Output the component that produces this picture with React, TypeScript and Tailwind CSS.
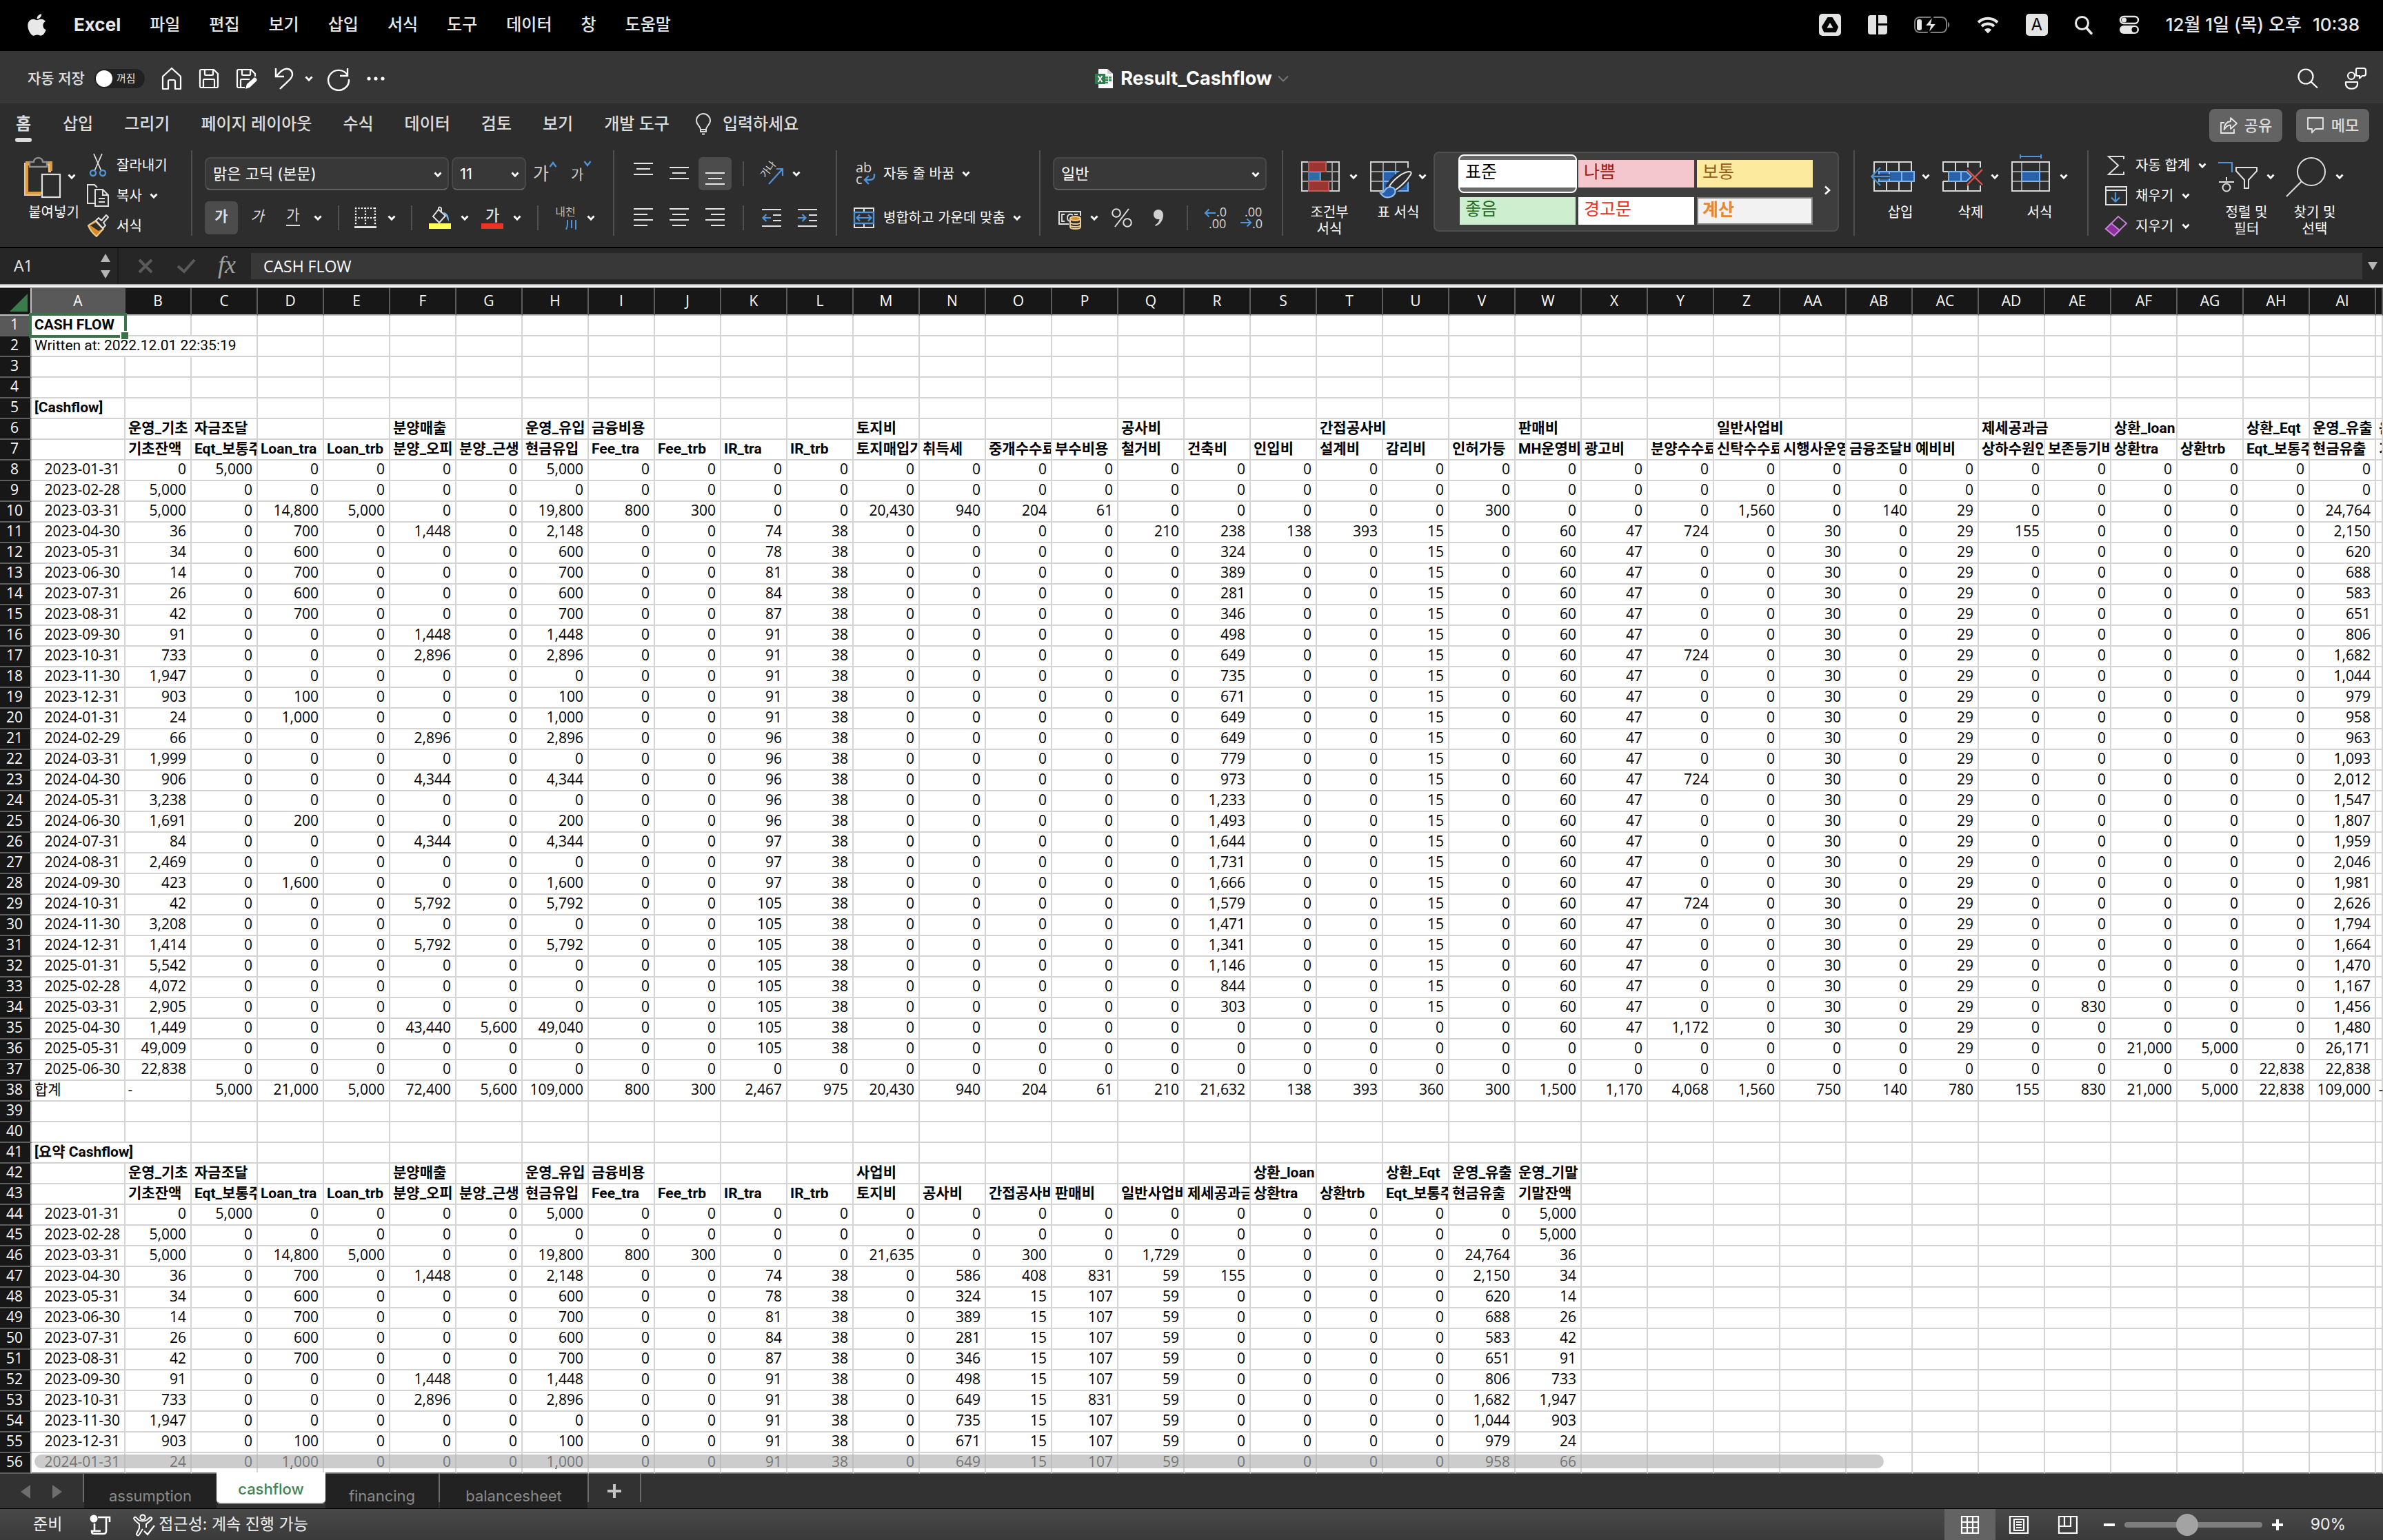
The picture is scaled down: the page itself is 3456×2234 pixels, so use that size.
import React from "react";
import { FaApple } from "react-icons/fa";

const UI = "font-['Inter','Noto_Sans_CJK_KR',sans-serif]";

/* ---------- sheet data ---------- */

function letter(i: number): string {
  return i < 26 ? String.fromCharCode(65 + i) : "A" + String.fromCharCode(65 + i - 26);
}
const COLS = Array.from({ length: 36 }, (_, i) => letter(i));

const fmt = (n: number) => n.toLocaleString("en-US");

const MONTHS = Array.from({ length: 30 }, (_, i) => {
  const d = new Date(Date.UTC(2023, i + 1, 0));
  return d.toISOString().slice(0, 10);
});

type Series = number[];
const N = 30;
const at = (values: Record<number, number>): Series =>
  Array.from({ length: N }, (_, i) => values[i + 8] ?? 0);
const span = (from: number, to: number, v: number): Series =>
  Array.from({ length: N }, (_, i) => (i + 8 >= from && i + 8 <= to ? v : 0));
const from = (row: number, list: number[]): Series =>
  Array.from({ length: N }, (_, i) => list[i + 8 - row] ?? 0);

const OUTFLOW = [
  0, 0, 24764, 2150, 620, 688, 583, 651, 806, 1682, 1044, 979, 958, 963, 1093, 2012, 1547, 1807,
  1959, 2046, 1981, 2626, 1794, 1664, 1470, 1167, 1456, 1480, 26171, 22838,
];
const BUILD = [
  238, 324, 389, 281, 346, 498, 649, 735, 671, 649, 649, 779, 973, 1233, 1493, 1644, 1731, 1666,
  1579, 1471, 1341, 1146, 844, 303,
];

const DATA: Record<string, Series> = {
  B: from(8, [
    0, 5000, 5000, 36, 34, 14, 26, 42, 91, 733, 1947, 903, 24, 66, 1999, 906, 3238, 1691, 84, 2469,
    423, 42, 3208, 1414, 5542, 4072, 2905, 1449, 49009, 22838,
  ]),
  C: at({ 8: 5000 }),
  D: at({ 10: 14800, 11: 700, 12: 600, 13: 700, 14: 600, 15: 700, 19: 100, 20: 1000, 25: 200, 28: 1600 }),
  E: at({ 10: 5000 }),
  F: at({ 11: 1448, 16: 1448, 17: 2896, 21: 2896, 23: 4344, 26: 4344, 29: 5792, 31: 5792, 35: 43440 }),
  G: at({ 35: 5600 }),
  I: at({ 10: 800 }),
  J: at({ 10: 300 }),
  K: from(11, [
    74, 78, 81, 84, 87, 91, 91, 91, 91, 91, 96, 96, 96, 96, 96, 97, 97, 97, 105, 105, 105, 105, 105,
    105, 105, 105,
  ]),
  L: span(11, 36, 38),
  M: at({ 10: 20430 }),
  N: at({ 10: 940 }),
  O: at({ 10: 204 }),
  P: at({ 10: 61 }),
  Q: at({ 11: 210 }),
  R: from(11, BUILD),
  S: at({ 11: 138 }),
  T: at({ 11: 393 }),
  U: span(11, 34, 15),
  V: at({ 10: 300 }),
  W: span(11, 35, 60),
  X: span(11, 35, 47),
  Y: at({ 11: 724, 17: 724, 23: 724, 29: 724, 35: 1172 }),
  Z: at({ 10: 1560 }),
  AA: span(11, 35, 30),
  AB: at({ 10: 140 }),
  AC: span(10, 36, 29),
  AD: at({ 11: 155 }),
  AE: at({ 34: 830 }),
  AF: at({ 36: 21000 }),
  AG: at({ 36: 5000 }),
  AH: at({ 37: 22838 }),
  AI: OUTFLOW,
};
DATA.H = DATA.C.map((c, i) => c + DATA.D[i] + DATA.E[i] + DATA.F[i] + DATA.G[i]);

const SUMMARY: Record<string, Series> = {
  M: from(10, [21635]),
  N: from(11, [586, ...BUILD.slice(1)]),
  O: from(10, [300, 408, 15, 15, 15, 15, 15, 15, 15, 15, 15]),
  P: from(11, [831, 107, 107, 107, 107, 107, 831, 107, 107, 107]),
  Q: from(10, [1729, 59, 59, 59, 59, 59, 59, 59, 59, 59, 59]),
  R: at({ 11: 155 }),
  S: at({}),
  T: at({}),
  U: at({}),
  V: OUTFLOW,
  W: from(8, [5000, 5000, 36, 34, 14, 26, 42, 91, 733, 1947, 903, 24, 66]),
};
for (const c of ["B", "C", "D", "E", "F", "G", "H", "I", "J", "K", "L"]) SUMMARY[c] = DATA[c];

const TOTALS = [
  5000, 21000, 5000, 72400, 5600, 109000, 800, 300, 2467, 975, 20430, 940, 204, 61, 210, 21632, 138,
  393, 360, 300, 1500, 1170, 4068, 1560, 750, 140, 780, 155, 830, 21000, 5000, 22838, 109000,
];

type Cell = { text: string; bold?: boolean; right?: boolean; cover?: number };
const bold = (text: string, cover = 1): Cell => ({ text, bold: true, cover });

function buildSheet(): Record<string, Cell>[] {
  const sheet: Record<string, Cell>[] = Array.from({ length: 57 }, () => ({}));
  sheet[1].A = bold("CASH FLOW");
  sheet[2].A = { text: "Written at: 2022.12.01 22:35:19", cover: 3 };
  sheet[5].A = bold("[Cashflow]");
  sheet[41].A = bold("[요약 Cashflow]", 2);

  const shared: [Record<string, string>, Record<string, string>] = [
    { B: "운영_기초", C: "자금조달", F: "분양매출", H: "운영_유입", I: "금융비용" },
    {
      B: "기초잔액", C: "Eqt_보통주", D: "Loan_tra", E: "Loan_trb", F: "분양_오피", G: "분양_근생",
      H: "현금유입", I: "Fee_tra", J: "Fee_trb", K: "IR_tra", L: "IR_trb",
    },
  ];
  const heads: Record<number, Record<string, string>> = {
    6: {
      ...shared[0], M: "토지비", Q: "공사비", T: "간접공사비", W: "판매비", Z: "일반사업비",
      AD: "제세공과금", AF: "상환_loan", AH: "상환_Eqt", AI: "운영_유출", AJ: "운영_기말",
    },
    7: {
      ...shared[1], M: "토지매입가", N: "취득세", O: "중개수수료", P: "부수비용", Q: "철거비",
      R: "건축비", S: "인입비", T: "설계비", U: "감리비", V: "인허가등", W: "MH운영비", X: "광고비",
      Y: "분양수수료", Z: "신탁수수료", AA: "시행사운영비", AB: "금융조달비", AC: "예비비",
      AD: "상하수원인", AE: "보존등기비", AF: "상환tra", AG: "상환trb", AH: "Eqt_보통주",
      AI: "현금유출", AJ: "기말잔액",
    },
    42: {
      ...shared[0], M: "사업비", S: "상환_loan", U: "상환_Eqt", V: "운영_유출", W: "운영_기말",
    },
    43: {
      ...shared[1], M: "토지비", N: "공사비", O: "간접공사비", P: "판매비", Q: "일반사업비",
      R: "제세공과금", S: "상환tra", T: "상환trb", U: "Eqt_보통주", V: "현금유출", W: "기말잔액",
    },
  };
  for (const [row, cells] of Object.entries(heads)) {
    for (const [col, text] of Object.entries(cells)) {
      const wide = row === "6" && ["T", "Z", "AD"].includes(col);
      sheet[Number(row)][col] = bold(text, wide ? 2 : 1);
    }
  }
  for (let i = 0; i < N; i++) {
    sheet[8 + i].A = { text: MONTHS[i], right: true };
    for (const c of Object.keys(DATA)) sheet[8 + i][c] = { text: fmt(DATA[c][i]), right: true };
  }
  sheet[38].A = { text: "합계" };
  sheet[38].B = { text: "-" };
  sheet[38].AJ = { text: "-" };
  TOTALS.forEach((v, i) => (sheet[38][COLS[i + 2]] = { text: fmt(v), right: true }));
  for (let i = 0; i < 13; i++) {
    sheet[44 + i].A = { text: MONTHS[i], right: true };
    for (const c of Object.keys(SUMMARY)) sheet[44 + i][c] = { text: fmt(SUMMARY[c][i]), right: true };
  }
  return sheet;
}
const SHEET = buildSheet();

/* ---------- small pieces ---------- */

function Svg({ w, h, children, className = "" }: { w: number; h: number; children: React.ReactNode; className?: string }) {
  return (
    <svg width={w} height={h} viewBox={`0 0 ${w} ${h}`} fill="none" aria-hidden="true" className={`shrink-0 overflow-visible ${className}`}>
      {children}
    </svg>
  );
}

function Chevron({ className = "" }: { className?: string }) {
  return (
    <Svg w={12} h={10} className={className}>
      <path d="M1.500 2.500 6 7.200 10.500 2.500" stroke="#fff" strokeWidth="2.800" />
    </Svg>
  );
}

const Divider = () => <div className="h-[124px] w-0.5 shrink-0 bg-[#4f4f4f]" />;
const Tick = ({ className = "" }: { className?: string }) => (
  <div className={`h-9 w-0.5 shrink-0 bg-[#4f4f4f] ${className}`} />
);

function Lines({ rows, top }: { rows: [number, number][]; top: number }) {
  return (
    <Svg w={28} h={40}>
      {rows.map(([x, w], i) => (
        <rect key={i} x={x} y={top + i * 8} width={w} height="2" fill="#e6e6e6" />
      ))}
    </Svg>
  );
}

/* ---------- menu bar ---------- */

const MENUS = ["파일", "편집", "보기", "삽입", "서식", "도구", "데이터", "창", "도움말"];

function MenuBar() {
  return (
    <header className="flex h-[74px] items-center justify-between bg-black pr-[34px] pb-0.5 pl-10 text-[24px] leading-8 font-medium text-[#e8e8e8]">
      <nav className="flex items-center gap-[42px]">
        <button aria-label="Apple" className="-mr-0.5">
          <FaApple className="h-9 w-[27px]" />
        </button>
        <button className="text-[26px] font-bold">Excel</button>
        {MENUS.map((m) => (
          <button key={m}>{m}</button>
        ))}
      </nav>
      <div className="flex items-center gap-[39px]">
        <Svg w={32} h={32}>
          <rect width="32" height="32" rx="5" fill="#e3e5e4" />
          <path d="M13 6h6l8 13-3 7H8l-3-7z" fill="#000" stroke="#000" strokeWidth="2" strokeLinejoin="round" />
          <path d="m16 13 4.500 7.500h-9z" fill="#e3e5e4" />
        </Svg>
        <Svg w={28} h={28}>
          <path d="M4 0h8v28H4a4 4 0 0 1-4-4V4a4 4 0 0 1 4-4zM15 0h9a4 4 0 0 1 4 4v8H15zM15 15h13v9a4 4 0 0 1-4 4h-9z" fill="#e3e3e3" />
        </Svg>
        <Svg w={52} h={28}>
          <rect x="1" y="3" width="46" height="22" rx="7" stroke="#7d7d7d" strokeWidth="2" />
          <path d="M49 10c3 1 3 7 0 8z" fill="#7d7d7d" />
          <rect x="4" y="6" width="7" height="16" rx="3" fill="#e8e8e8" />
          <path d="M28 0 15 16h8l-3 12 13-16h-8z" fill="#e8e8e8" stroke="#000" strokeWidth="2" />
        </Svg>
        <Svg w={32} h={26}>
          <path d="M2 9.500a20 20 0 0 1 28 0M7 15a13 13 0 0 1 18 0" stroke="#e8e8e8" strokeWidth="4" />
          <path d="M16 25.500 10.800 20a7.500 7.500 0 0 1 10.400 0z" fill="#e8e8e8" />
        </Svg>
        <div className="grid size-8 place-items-center rounded-[5px] bg-[#e3e5e4] text-[24px] font-normal text-black">A</div>
        <Svg w={26} h={28}>
          <circle cx="10.500" cy="11.500" r="9" stroke="#e8e8e8" strokeWidth="3" />
          <path d="m17 18.500 7 8" stroke="#e8e8e8" strokeWidth="3.500" strokeLinecap="round" />
        </Svg>
        <Svg w={28} h={28}>
          <rect x="1" y="2" width="26" height="10" rx="5" stroke="#e8e8e8" strokeWidth="2.400" />
          <circle cx="6.500" cy="7" r="3.600" fill="#e8e8e8" />
          <rect y="15" width="28" height="12" rx="6" fill="#e8e8e8" />
          <circle cx="21.500" cy="21" r="4" fill="#000" />
        </Svg>
        <time className="flex gap-4 text-[26px] whitespace-nowrap">
          <span>12월 1일 (목) 오후</span>
          <span>10:38</span>
        </time>
      </div>
    </header>
  );
}

/* ---------- title bar ---------- */

function TitleBar() {
  return (
    <div className="grid h-[76px] grid-cols-[1fr_auto_1fr] items-center bg-[#363636] px-6 pt-1 text-white">
      <div className="flex items-center pl-4">
        <label htmlFor="autosave" className="text-[21px] leading-7 font-medium text-[#e0e0e0]">자동 저장</label>
        <button id="autosave" role="switch" aria-checked="false" className="ml-3.5 flex h-7 w-[73px] items-center rounded-full bg-[#212121] pl-0.5 text-[15px] text-[#e0e0e0]">
          <span className="mr-1.5 size-6 rounded-full bg-white" />
          꺼짐
        </button>
        <button aria-label="홈" className="ml-6">
          <Svg w={30} h={34}>
            <path d="M2 14 15 2l13 12v18h-8V21a2 2 0 0 0-2-2h-6a2 2 0 0 0-2 2v11H2z" stroke="#fff" strokeWidth="2.200" strokeLinejoin="round" />
          </Svg>
        </button>
        <button aria-label="저장" className="ml-6">
          <Svg w={30} h={30}>
            <path d="M4 2h18l6 6v18a2 2 0 0 1-2 2H4a2 2 0 0 1-2-2V4a2 2 0 0 1 2-2z" stroke="#fff" strokeWidth="2.200" />
            <path d="M9 2v7a1 1 0 0 0 1 1h10a1 1 0 0 0 1-1V2M7 28V17a1 1 0 0 1 1-1h14a1 1 0 0 1 1 1v11" stroke="#fff" strokeWidth="2.200" />
          </Svg>
        </button>
        <button aria-label="다른 이름으로 저장" className="ml-6">
          <Svg w={32} h={32}>
            <path d="M13 29H4a2 2 0 0 1-2-2V5a2 2 0 0 1 2-2h18l6 6v4" stroke="#fff" strokeWidth="2.200" />
            <path d="M9 3v7a1 1 0 0 0 1 1h10a1 1 0 0 0 1-1V3M7 29V18a1 1 0 0 1 1-1h12" stroke="#fff" strokeWidth="2.200" />
            <path d="m14 31 2-7 10-9c2-1.500 6 1.500 4 4.500l-10 9.500z" fill="#fff" />
          </Svg>
        </button>
        <button aria-label="실행 취소" className="ml-6">
          <Svg w={28} h={34}>
            <path d="M2 2v12h12" stroke="#fff" strokeWidth="2.400" />
            <path d="M2 14 10 6c7-6 16-3 16 5 0 6-7 10-18 21" stroke="#fff" strokeWidth="2.400" />
          </Svg>
        </button>
        <Chevron className="ml-4" />
        <button aria-label="다시 실행" className="ml-5">
          <Svg w={34} h={34}>
            <path d="M30 2v11H19" stroke="#fff" strokeWidth="2.400" />
            <path d="M30 12A15 14.500 0 1 0 32 18" stroke="#fff" strokeWidth="2.400" />
          </Svg>
        </button>
        <button aria-label="더 보기" className="ml-6">
          <Svg w={26} h={8}>
            <circle cx="3" cy="4" r="2.600" fill="#fff" />
            <circle cx="13" cy="4" r="2.600" fill="#fff" />
            <circle cx="23" cy="4" r="2.600" fill="#fff" />
          </Svg>
        </button>
      </div>
      <h1 className="flex items-center text-[27px] leading-8 font-bold">
        <Svg w={28} h={30} className="mr-2.5">
          <path d="M6 1h13l8 7v21H6z" fill="#fff" />
          <path d="M19 1v7h8z" fill="#cfcfcf" />
          <path d="M16 12h4v3h-4zM21 12h4v3h-4zM16 16h4v3h-4zM21 16h4v3h-4zM16 20h4v2h-4z" fill="#2f9a5e" />
          <rect x="1" y="8" width="15" height="15" fill="#2f7d4f" />
          <path d="m5.500 11 6 9m0-9-6 9" stroke="#fff" strokeWidth="1.800" />
        </Svg>
        Result_Cashflow
        <Svg w={16} h={10} className="ml-2">
          <path d="m1 1.500 7 7 7-7" stroke="#757575" strokeWidth="2" />
        </Svg>
      </h1>
      <div className="flex items-center justify-end gap-[38px]">
        <button aria-label="검색">
          <Svg w={30} h={30}>
            <circle cx="12" cy="12" r="10.500" stroke="#fff" strokeWidth="2.200" />
            <path d="m19.500 19.500 9.500 9" stroke="#fff" strokeWidth="2.200" />
          </Svg>
        </button>
        <button aria-label="사용자">
          <Svg w={32} h={34}>
            <circle cx="10" cy="13" r="5" stroke="#fff" strokeWidth="2.200" />
            <path d="M2 22h17v3c0 9-17 9-17 0z" stroke="#fff" strokeWidth="2.200" strokeLinejoin="round" />
            <path d="M19 2h9a3 3 0 0 1 3 3v5a3 3 0 0 1-3 3h-2l-4 3.500V13h-3a2 2 0 0 1-2-2V4a2 2 0 0 1 2-2z" stroke="#fff" strokeWidth="2.200" strokeLinejoin="round" />
          </Svg>
        </button>
      </div>
    </div>
  );
}

/* ---------- ribbon tabs ---------- */

const TABS = ["삽입", "그리기", "페이지 레이아웃", "수식", "데이터", "검토", "보기", "개발 도구"];

function RibbonTabs() {
  return (
    <div className="flex h-16 items-start justify-between bg-[#2d2d2d] pr-5 pl-[22px] text-[24px] leading-8 font-medium text-[#dcdcdc]">
      <nav className="flex gap-[45px] pt-3.5">
        <button className="flex flex-col items-center gap-1 font-bold">
          홈
          <span className="h-1.5 w-6 rounded-full bg-[#dcdcdc]" />
        </button>
        {TABS.map((t) => (
          <button key={t} className="self-start">{t}</button>
        ))}
        <button className="-ml-2 flex items-center gap-4 self-start">
          <Svg w={24} h={32}>
            <path d="M8 24c0-5-6-7-6-13a10 10 0 0 1 20 0c0 6-6 8-6 13z" stroke="#dcdcdc" strokeWidth="2" />
            <path d="M8 24v3h8v-3M10 30.500h4" stroke="#dcdcdc" strokeWidth="2" />
          </Svg>
          입력하세요
        </button>
      </nav>
      <div className="flex gap-5 pt-2 text-[22px]">
        <button className="flex h-12 w-[106px] items-center justify-center gap-2.5 rounded-lg bg-[#636363]">
          <Svg w={26} h={26}>
            <path d="M7 9H2v15h19v-6" stroke="#e6e6e6" strokeWidth="1.800" />
            <path d="M16 2v5C10 7.500 7 12 6.500 19c2.500-4.500 5-6.500 9.500-6.500V18l9-8z" stroke="#e6e6e6" strokeWidth="1.800" strokeLinejoin="round" />
          </Svg>
          공유
        </button>
        <button className="flex h-12 w-[106px] items-center justify-center gap-2.5 rounded-lg bg-[#636363]">
          <Svg w={26} h={26}>
            <path d="M2 2h22v16H13l-5 5.500V18H2z" stroke="#e6e6e6" strokeWidth="1.800" strokeLinejoin="round" />
          </Svg>
          메모
        </button>
      </div>
    </div>
  );
}

/* ---------- ribbon ---------- */

function Box({ label, value, className }: { label: string; value: string; className: string }) {
  return (
    <div className={`relative h-12 ${className}`}>
      <select aria-label={label} className="size-full appearance-none rounded-lg border-2 border-[#484848] border-b-[#616161] bg-[#383838] pl-2.5 text-[22px] leading-8 text-white">
        <option>{value}</option>
      </select>
      <Chevron className="pointer-events-none absolute top-5 right-2.5" />
    </div>
  );
}

function Big({ icon, lines, gap = "gap-2.5" }: { icon: React.ReactNode; lines: string[]; gap?: string }) {
  return (
    <button className="flex shrink-0 flex-col items-center pt-1.5">
      <span className={`flex items-center ${gap}`}>
        {icon}
        <Chevron />
      </span>
      <span className="mt-2 leading-6">
        {lines.map((l) => (
          <span key={l} className="block">{l}</span>
        ))}
      </span>
    </button>
  );
}

function Small({ icon, text, menu = true, className = "h-11 gap-[11px]" }: { icon: React.ReactNode; text: string; menu?: boolean; className?: string }) {
  return (
    <button className={`flex items-center whitespace-nowrap ${className}`}>
      {icon}
      {text}
      {menu && <Chevron />}
    </button>
  );
}

const G = "#e0e0e0";
const BLUE = "#4f94d8";

function ClipboardGroup() {
  return (
    <div className="flex w-[277px] shrink-0 pl-[30px]">
      <div className="flex w-24 flex-col pt-1.5">
        <button className="flex flex-col">
          <span className="flex items-center gap-2.5 pl-1">
            <Svg w={54} h={64}>
              <path d="M38 26V14H3v44h22" stroke="#e9c98a" strokeWidth="4" />
              <path d="M38 26V14H3v44h22" stroke="#e09b3c" strokeWidth="4" transform="translate(2 -2)" />
              <path d="M9 18v-7h6c0-8 13-8 13 0h6v7z" fill="#2d2d2d" stroke="#8e8e8e" strokeWidth="2.400" />
              <rect x="27" y="29" width="26" height="33" fill="#2d2d2d" stroke={G} strokeWidth="2.200" />
            </Svg>
            <Chevron />
          </span>
          <span className="mt-2 leading-6">붙여넣기</span>
        </button>
      </div>
      <div className="flex flex-col items-start">
        <Small
          menu={false}
          text="잘라내기"
          icon={
            <Svg w={32} h={36}>
              <path d="M10 1 21 26M22 1 11 26" stroke={G} strokeWidth="1.800" />
              <circle cx="9" cy="29" r="4" stroke={BLUE} strokeWidth="2.400" />
              <circle cx="23" cy="29" r="4" stroke={BLUE} strokeWidth="2.400" />
            </Svg>
          }
        />
        <Small
          text="복사"
          icon={
            <Svg w={32} h={34}>
              <path d="M11 28H1V1h10l4 4" stroke={G} strokeWidth="2" />
              <path d="M12 8h11l8 8v16H12z M23 8v8h8M17 21h9M17 26h9" stroke={G} strokeWidth="2" />
            </Svg>
          }
        />
        <Small
          menu={false}
          text="서식"
          icon={
            <Svg w={32} h={34}>
              <path d="M2 16 13 9l11 12-10 11C9 28 4 22 2 16z" fill="#d98e2b" stroke="#f0cf8e" strokeWidth="2" />
              <path d="m5 16 8-4 9 9-5 3z" fill="#2d2d2d" />
              <path d="m13 9 4-4 4 4 7-8 3 3-7 8 3 4-4 4z" fill="#2d2d2d" stroke={G} strokeWidth="2" strokeLinejoin="round" />
            </Svg>
          }
        />
      </div>
    </div>
  );
}

function FontGroup() {
  return (
    <div className="flex w-[610px] shrink-0 flex-col gap-4 pt-2.5 pl-[18px]">
      <div className="flex items-center">
        <Box label="글꼴" value="맑은 고딕 (본문)" className="w-[354px]" />
        <Box label="글꼴 크기" value="11" className="ml-1 w-[108px]" />
        <button aria-label="글꼴 크기 크게" className="ml-2.5 flex items-start text-[25px] leading-9 text-[#d0d0d0]">
          가
          <Svg w={12} h={10}>
            <path d="m1.500 8 4.500-6 4.500 6" stroke={BLUE} strokeWidth="2.400" />
          </Svg>
        </button>
        <button aria-label="글꼴 크기 작게" className="ml-5 flex items-start leading-9 text-[#d0d0d0]">
          <span className="pt-1">가</span>
          <Svg w={12} h={10}>
            <path d="m1.500 2 4.500 6 4.500-6" stroke={BLUE} strokeWidth="2.400" />
          </Svg>
        </button>
      </div>
      <div className="flex h-12 items-center">
        <button aria-label="굵게" aria-pressed="true" className="size-12 rounded-md bg-[#4c4c4c] pb-1 text-[21px] font-bold text-[#dcdcdc]">가</button>
        <button aria-label="기울임꼴" className="ml-1 size-12 pb-1 text-[21px] text-[#dcdcdc] italic">가</button>
        <button aria-label="밑줄" className="ml-1 flex size-12 flex-col items-center pt-1.5 text-[21px] leading-7 text-[#dcdcdc]">
          가
          <span className="h-0.5 w-5 bg-[#dcdcdc]" />
        </button>
        <Chevron className="ml-1.5" />
        <Tick className="ml-[23px]" />
        <button aria-label="테두리" className="ml-5.5">
          <Svg w={32} h={32}>
            <path d="M1 2h30M2 1v26M16 1v26M30 1v26M1 16h30" stroke="#fff" strokeWidth="2.200" strokeDasharray="2.200 2.200" />
            <path d="M0 29.500h32" stroke="#fff" strokeWidth="2.600" />
          </Svg>
        </button>
        <Chevron className="ml-4" />
        <Tick className="ml-[22px]" />
        <button aria-label="채우기 색" className="ml-6">
          <Svg w={32} h={32}>
            <path d="m14 4 10 9-9 10-9-9z M14 4v-2c0-2 4-2 4 1v6" stroke={G} strokeWidth="2" />
            <path d="M20 8c6 0 9 4 9 13-2-2-3-5-4-8z" fill="#7fb4ea" />
            <rect y="24" width="32" height="8" fill="#ffff54" />
          </Svg>
        </button>
        <Chevron className="ml-3.5" />
        <button aria-label="글꼴 색" className="ml-4.5 flex w-8 flex-col items-center text-[22px] leading-6 font-medium text-[#e0e0e0]">
          가
          <span className="h-2 w-8 bg-[#ea3323]" />
        </button>
        <Chevron className="ml-3.5" />
        <Tick className="ml-[23px]" />
        <button aria-label="윗주 필드" className="ml-5.5 flex w-[34px] flex-col gap-1 text-[16px] leading-4 text-[#b8b8b8]">
          내천
          <Svg w={34} h={14}>
            <path d="M20 0v6c0 3-1 6-2 8M26 0v12M32 0v14" stroke={BLUE} strokeWidth="2" />
          </Svg>
        </button>
        <Chevron className="ml-3.5" />
      </div>
    </div>
  );
}

function AlignGroup() {
  const full: [number, number] = [0, 28];
  return (
    <div className="flex w-[321px] shrink-0 flex-col gap-4 pt-2.5 pl-[18px]">
      <div className="flex items-center">
        <div className="flex gap-1">
          <button aria-label="위쪽 맞춤" className="grid size-12 place-items-center">
            <Lines top={4} rows={[full, [4, 20], full]} />
          </button>
          <button aria-label="가운데 맞춤" className="grid size-12 place-items-center">
            <Lines top={10} rows={[full, [4, 20], full]} />
          </button>
          <button aria-label="아래쪽 맞춤" aria-pressed="true" className="grid size-12 place-items-center rounded-md bg-[#4c4c4c]">
            <Lines top={18} rows={[full, [4, 20], full]} />
          </button>
        </div>
        <Tick className="ml-4" />
        <button aria-label="방향" className="ml-6">
          <Svg w={34} h={34}>
            <text x="0" y="0" transform="translate(7 24) rotate(-52)" fontSize="14" fill="#e0e0e0">가나</text>
            <path d="M12 32 32 10M23 10h9v10" stroke={BLUE} strokeWidth="2.200" />
          </Svg>
        </button>
        <Chevron className="ml-3" />
      </div>
      <div className="flex items-center">
        <div className="flex gap-1">
          <button aria-label="왼쪽 맞춤" className="grid size-12 place-items-center">
            <Lines top={6} rows={[full, [0, 20], full, [0, 20]]} />
          </button>
          <button aria-label="가운데" className="grid size-12 place-items-center">
            <Lines top={6} rows={[full, [4, 20], full, [4, 20]]} />
          </button>
          <button aria-label="오른쪽 맞춤" className="grid size-12 place-items-center">
            <Lines top={6} rows={[full, [8, 20], full, [8, 20]]} />
          </button>
        </div>
        <Tick className="ml-4" />
        <button aria-label="내어쓰기" className="ml-4 grid size-12 place-items-center">
          <Svg w={28} h={28}>
            <path d="M0 2h28M16 10h12M16 18h12M0 26h28" stroke={G} strokeWidth="2" />
            <path d="M13 14H2M6.500 9 1.500 14l5 5" stroke={BLUE} strokeWidth="2.200" />
          </Svg>
        </button>
        <button aria-label="들여쓰기" className="ml-1 grid size-12 place-items-center">
          <Svg w={28} h={28}>
            <path d="M0 2h28M16 10h12M16 18h12M0 26h28" stroke={G} strokeWidth="2" />
            <path d="M0 14h11M6.500 9l5 5-5 5" stroke={BLUE} strokeWidth="2.200" />
          </Svg>
        </button>
      </div>
    </div>
  );
}

function WrapGroup() {
  return (
    <div className="flex w-[293px] shrink-0 flex-col items-start gap-4 pt-2.5 pl-6">
      <Small
        className="h-12 gap-[11px]"
        text="자동 줄 바꿈"
        icon={
          <Svg w={32} h={34} className="font-['Open_Sans',sans-serif]">
            <text x="3" y="15" fontSize="20" fill="#d8d8d8">ab</text>
            <text x="3" y="32" fontSize="20" fill="#d8d8d8">c</text>
            <path d="M30 17v3c0 4-3 6-7 6h-7M22 20l-6 6 6 6" stroke={BLUE} strokeWidth="2.400" />
          </Svg>
        }
      />
      <Small
        className="h-12 gap-[11px]"
        text="병합하고 가운데 맞춤"
        icon={
          <Svg w={32} h={32}>
            <path d="M1 8V2h28v6M15 2v6M1 24v6h28v-6M15 24v6" stroke={G} strokeWidth="2" />
            <rect x="1" y="8" width="28" height="16" stroke={BLUE} strokeWidth="2.400" />
            <path d="M5 16h20M9 11.500 4.500 16 9 20.500M21 11.500l4.500 4.500-4.500 4.500" stroke={BLUE} strokeWidth="2.200" />
          </Svg>
        }
      />
    </div>
  );
}

function NumberGroup() {
  return (
    <div className="flex w-[350px] shrink-0 flex-col gap-4 pt-2.5 pl-[18px]">
      <Box label="표시 형식" value="일반" className="w-[310px]" />
      <div className="flex h-12 items-center">
        <button aria-label="회계 표시 형식" className="ml-2">
          <Svg w={34} h={32}>
            <path d="M15 25H1V7h31v6" stroke={G} strokeWidth="2" />
            <path d="M9 11H5v10h4M21 12c-5-3-8 0-8 4 0 3 1 4 3 5M23 11h5" stroke={G} strokeWidth="1.800" />
            <path d="M17 17v12c0 4 15 4 15 0V17" fill="#2d2d2d" stroke="#f0cf8e" strokeWidth="2" />
            <ellipse cx="24.500" cy="17" rx="7.500" ry="3" fill="#d98e2b" stroke="#f0cf8e" strokeWidth="2" />
            <path d="M17 22c0 4 15 4 15 0M17 26c0 4 15 4 15 0" stroke="#f0cf8e" strokeWidth="1.800" />
          </Svg>
        </button>
        <Chevron className="ml-3" />
        <button aria-label="백분율" className="ml-4.5">
          <Svg w={32} h={32}>
            <circle cx="8" cy="9" r="5.800" stroke={G} strokeWidth="2" />
            <circle cx="24" cy="23" r="5.800" stroke={G} strokeWidth="2" />
            <path d="M26 3 6 29" stroke={G} strokeWidth="2" />
          </Svg>
        </button>
        <button aria-label="쉼표" className="ml-7">
          <Svg w={18} h={28}>
            <path d="M9 2c4 0 7 3 7 8 0 8-5 14-11 16l-1-1.500c4-2 6-5 6.500-8.500C5 17 2 13 2 9c0-4 3-7 7-7z" fill="#d0d0d0" />
          </Svg>
        </button>
        <Tick className="ml-8" />
        <button aria-label="자릿수 늘림" className="ml-6">
          <Svg w={32} h={32} className="font-['Open_Sans',sans-serif]">
            <text x="17" y="14" fontSize="18" fill="#d8d8d8">.0</text>
            <text x="6" y="31" fontSize="18" fill="#d8d8d8">.00</text>
            <path d="M16 9H1M6.500 3.500 1 9l5.500 5.500" stroke={BLUE} strokeWidth="2.200" />
          </Svg>
        </button>
        <button aria-label="자릿수 줄임" className="ml-5">
          <Svg w={32} h={32} className="font-['Open_Sans',sans-serif]">
            <text x="6" y="14" fontSize="18" fill="#d8d8d8">.00</text>
            <text x="17" y="31" fontSize="18" fill="#d8d8d8">.0</text>
            <path d="M0 23h15M9.500 17.500 15 23l-5.500 5.500" stroke={BLUE} strokeWidth="2.200" />
          </Svg>
        </button>
      </div>
    </div>
  );
}

function StyleCell({ text, className }: { text: string; className: string }) {
  return <button className={`relative h-10 pb-1.5 pl-2 text-left text-[25px] leading-8 ${className}`}>{text}</button>;
}

function StylesGroup() {
  return (
    <div className="flex w-[827px] shrink-0 items-start pl-[26px]">
      <Big
        gap="gap-3.5"
        lines={["조건부", "서식"]}
        icon={
          <Svg w={56} h={64}>
            <path d="M1 25h54M1 39h54M28 25v14M45 11v42" stroke="#9a9a9a" strokeWidth="2" />
            <path d="M1 11h54v42H1z" stroke="#d0d0d0" strokeWidth="2" />
            <rect x="11" y="11" width="25" height="14" fill="#9a3631" stroke="#c75752" strokeWidth="2" />
            <rect x="11" y="26" width="16" height="12" fill="#336aa5" stroke="#4683bd" strokeWidth="2" />
            <rect x="11" y="39" width="29" height="14" fill="#9a3631" stroke="#c75752" strokeWidth="2" />
          </Svg>
        }
      />
      <div className="w-[18px] shrink-0" />
      <Big
        lines={["표 서식"]}
        icon={
          <Svg w={60} h={64}>
            <path d="M1 25h54M1 39h54M19 11v42M37 11v42" stroke="#9a9a9a" strokeWidth="2" />
            <path d="M1 11h54v42H1z" stroke="#d0d0d0" strokeWidth="2" />
            <path d="M19 25h36v28H19z M37 25v28M19 39h36" fill="#2860ac" stroke="#7fb4ea" strokeWidth="2" />
            <path d="M27 45C34 34 48 23 56 23c4 0 4 3 3 5-4 9-14 19-24 24z" stroke="#2d2d2d" strokeWidth="7" />
            <path d="M28 46C35 35 49 25 57 25c3 0 3 2 2 4-5 8-14 17-23 23z" fill="#2d2d2d" stroke="#e6e6e6" strokeWidth="2" />
            <path d="M15 56c6 0 5-3 8-6 4-4 11-3 13 1 2 5-2 10-8 11-5 1-10-1-13-6z" fill="#2860ac" stroke="#8dbdee" strokeWidth="2.200" />
          </Svg>
        }
      />
      <div className="mt-0.5 ml-2.5 flex h-[116px] w-[588px] items-start rounded-lg border-2 border-[#4f4f4f] bg-[#3e3e3e] pt-2.5 pl-9">
        <div className="grid w-[512px] grid-cols-3 gap-x-1 gap-y-3.5">
          <div className="relative grid">
            <span className="absolute -inset-x-0.5 -inset-y-2 rounded-lg border-2 border-white bg-[#6a6a6a]" />
            <StyleCell text="표준" className="bg-white text-black" />
          </div>
          <StyleCell text="나쁨" className="bg-[#f4c7ce] text-[#9c1c14]" />
          <StyleCell text="보통" className="bg-[#fcea9f] text-[#945b16]" />
          <StyleCell text="좋음" className="bg-[#cdeecf] text-[#21671b]" />
          <StyleCell text="경고문" className="bg-white text-[#ea3323]" />
          <StyleCell text="계산" className="border-2 border-[#7f7f7f] bg-[#f2f2f2] pl-1.5! font-bold text-[#ea8632]" />
        </div>
        <button aria-label="스타일 더 보기" className="mt-9 ml-4">
          <Svg w={10} h={16}>
            <path d="m2 2.500 6 5.500-6 5.500" stroke="#fff" strokeWidth="2.600" />
          </Svg>
        </button>
      </div>
    </div>
  );
}

function CellsGroup() {
  return (
    <div className="flex w-[337px] shrink-0 items-start gap-[18px] pl-[23px]">
      <Big
        lines={["삽입"]}
        icon={
          <Svg w={64} h={64}>
            <path d="M5 11h54v42H5zM23 11v42M41 11v42" stroke="#d8d8d8" strokeWidth="2" />
            <path d="M12 25h51v14H12z" fill="#2860ac" stroke="#7fb4ea" strokeWidth="2" />
            <path d="M27 25v14M45 25v14" stroke="#7fb4ea" strokeWidth="2" />
            <path d="M28 32H2" stroke="#2d2d2d" strokeWidth="6" />
            <path d="M28 32H2M14 19 1.500 32 14 45" stroke={BLUE} strokeWidth="2.400" />
          </Svg>
        }
      />
      <Big
        lines={["삭제"]}
        icon={
          <Svg w={60} h={64}>
            <path d="M1 25V11h54v8M19 11v14M37 11v8M1 39v14h54v-8M19 39v14M37 45v8M1 25h8M1 39h8" stroke="#d8d8d8" strokeWidth="2" />
            <path d="M9 25h26l7 7-7 7H9z" fill="#2860ac" stroke="#7fb4ea" strokeWidth="2" />
            <path d="M27 25v14" stroke="#7fb4ea" strokeWidth="2" />
            <path d="m36 22 22 22M58 22 36 44" stroke="#d9534a" strokeWidth="2.400" />
          </Svg>
        }
      />
      <Big
        lines={["서식"]}
        icon={
          <Svg w={60} h={64}>
            <path d="M1 25h54M1 39h54M15 11v42M41 11v42" stroke="#9a9a9a" strokeWidth="2" />
            <path d="M1 11h54v42H1z" stroke="#d8d8d8" strokeWidth="2" />
            <rect x="15" y="25" width="26" height="14" fill="#2860ac" stroke="#7fb4ea" strokeWidth="2" />
            <path d="M13 3h30M13 0v6M43 0v6" stroke={BLUE} strokeWidth="2" />
          </Svg>
        }
      />
    </div>
  );
}

function EditGroup() {
  return (
    <div className="flex shrink-0 items-start pl-6">
      <div className="flex w-[164px] flex-col items-start">
        <Small
          className="h-11 gap-3"
          text="자동 합계"
          icon={
            <Svg w={32} h={32}>
              <path d="M27 7V3H5l14 13L5 29h22v-4" stroke={G} strokeWidth="2" />
            </Svg>
          }
        />
        <Small
          className="h-11 gap-3"
          text="채우기"
          icon={
            <Svg w={32} h={30}>
              <path d="M1 2h30v26H1zM1 7h30" stroke={G} strokeWidth="2" />
              <path d="M15 10v13M9 17.500l6 6 6-6" stroke={BLUE} strokeWidth="2.200" />
            </Svg>
          }
        />
        <Small
          className="h-11 gap-3"
          text="지우기"
          icon={
            <Svg w={32} h={32}>
              <path d="M1 20 19 2l12 10-18 18z" stroke="#c57fd6" strokeWidth="2" />
              <path d="m1 20 8-8 12 10-8 8z" fill="#8c2f9f" stroke="#c57fd6" strokeWidth="2" />
            </Svg>
          }
        />
      </div>
      <Big
        lines={["정렬 및", "필터"]}
        icon={
          <Svg w={60} h={64}>
            <path d="M0 12h20v14" stroke={BLUE} strokeWidth="2.200" />
            <path d="M12 33v5M1 40h22" stroke={G} strokeWidth="2" />
            <circle cx="12" cy="48" r="5.500" stroke={G} strokeWidth="2" />
            <path d="M26 19h30v5L44 37v12h-6V37L26 24z" stroke={G} strokeWidth="2" />
          </Svg>
        }
      />
      <div className="w-4 shrink-0" />
      <Big
        gap="gap-3"
        lines={["찾기 및", "선택"]}
        icon={
          <Svg w={60} h={64}>
            <circle cx="37" cy="25" r="20" stroke={G} strokeWidth="2" />
            <path d="M23 39 1 61" stroke={G} strokeWidth="2" />
          </Svg>
        }
      />
    </div>
  );
}

function Ribbon() {
  return (
    <div className="flex h-[146px] items-start overflow-hidden border-b-2 border-black bg-[#2d2d2d] pt-1 text-[20px] text-white">
      <ClipboardGroup />
      <Divider />
      <FontGroup />
      <Divider />
      <AlignGroup />
      <Divider />
      <WrapGroup />
      <Divider />
      <NumberGroup />
      <Divider />
      <StylesGroup />
      <Divider />
      <CellsGroup />
      <Divider />
      <EditGroup />
    </div>
  );
}

/* ---------- formula bar ---------- */

function FormulaBar() {
  return (
    <div className="flex h-[52px] items-center bg-[#262626] font-['Open_Sans','Noto_Sans_CJK_KR',sans-serif] text-[23px] text-[#e6e6e6]">
      <input aria-label="이름 상자" defaultValue="A1" className="h-full w-[146px] bg-transparent pb-0.5 pl-5 outline-none" />
      <Svg w={14} h={36}>
        <path d="M7 0l7 12H0zM7 36l7-12H0z" fill="#b5b5b5" />
      </Svg>
      <div className="ml-2.5 h-full w-0.5 bg-[#1c1c1c]" />
      <button aria-label="취소" className="ml-7">
        <Svg w={22} h={20}>
          <path d="m2 1 18 18M20 1 2 19" stroke="#5a5a5a" strokeWidth="4" />
        </Svg>
      </button>
      <button aria-label="입력" className="ml-[34px]">
        <Svg w={28} h={20}>
          <path d="m2 10 9 8L26 1" stroke="#5a5a5a" strokeWidth="4" />
        </Svg>
      </button>
      <button aria-label="함수 삽입" className="ml-8 w-12 pb-1 text-left font-['Liberation_Serif',serif] text-[36px] leading-9 text-[#a0a0a0] italic">fx</button>
      <input aria-label="수식 입력줄" defaultValue="CASH FLOW" className="h-[38px] min-w-0 flex-1 bg-[#383838] pl-4.5 text-white outline-none" />
      <button aria-label="확장" className="mr-2 ml-2">
        <Svg w={14} h={12}>
          <path d="M0 0h14L7 12z" fill="#b5b5b5" />
        </Svg>
      </button>
    </div>
  );
}

/* ---------- sheet ---------- */

function SheetRow({ row }: { row: number }) {
  const cells = SHEET[row];
  const out: React.ReactNode[] = [];
  const edge = row === 56 ? "border-b-[#6b6b6b]" : "border-b-[#d4d4d4]";
  for (let i = 0; i < COLS.length; ) {
    const c = cells[COLS[i]];
    const cover = c?.cover ?? 1;
    const active = row === 1 && i === 0;
    const face = c && !c.right ? "font-['Roboto','Noto_Sans_CJK_KR',sans-serif] leading-[26px]" : "leading-6";
    const clip = active ? "relative" : c?.bold ? "overflow-hidden" : "";
    out.push(
      <td
        key={i}
        colSpan={cover}
        className={`h-[30px] border-r-2 border-b-2 border-r-[#d4d4d4] p-0 pr-1.5 pl-1 align-top whitespace-nowrap ${face} ${edge} ${clip} ${c?.bold ? "font-bold" : ""} ${c?.right ? "text-right" : "text-left"}`}
      >
        {c?.text}
        {active && (
          <>
            <span className="absolute -top-1 -right-1 -bottom-1 -left-1 z-10 border-4 border-[#3b724a]" />
            <span className="absolute -right-1.5 -bottom-1.5 z-10 size-3 border-t-2 border-l-2 border-white bg-[#3b724a]" />
          </>
        )}
      </td>
    );
    i += cover;
  }
  return (
    <tr>
      <th
        scope="row"
        className={`h-[30px] border-r-2 border-b-2 border-r-[#bfbfbf] border-b-[#5e5e5e] p-0 pr-0.5 align-top leading-6 font-normal text-white ${row === 1 ? "bg-[#595959]" : "bg-[#171717]"}`}
      >
        {row}
      </th>
      {out}
    </tr>
  );
}

function Sheet() {
  return (
    <main className="relative overflow-hidden bg-white font-['Open_Sans','Noto_Sans_CJK_KR',sans-serif] text-[21px] text-black">
      <table className="w-full table-fixed border-separate border-spacing-0">
        <colgroup>
          <col className="w-[46px]" />
          <col className="w-[136px]" />
          {COLS.slice(1, 35).map((c) => (
            <col key={c} className="w-24" />
          ))}
          <col />
        </colgroup>
        <thead>
          <tr>
            <th aria-label="모두 선택" className="h-10 border-r-2 border-b-2 border-[#bfbfbf] bg-[#171717] p-0 pt-1 pl-3.5">
              <Svg w={26} h={26}>
                <path d="M26 0v26H0z" fill="#3b7a4b" />
              </Svg>
            </th>
            {COLS.map((c, i) => (
              <th
                key={c}
                scope="col"
                className={`h-10 border-r-2 border-b-2 border-b-[#bfbfbf] p-0 pb-0.5 leading-8 font-normal text-white ${i === 0 ? "border-r-[#595959] bg-[#595959]" : "border-r-[#5e5e5e] bg-[#171717]"}`}
              >
                {i < 35 ? c : ""}
              </th>
            ))}
          </tr>
        </thead>
        <tbody>
          {Array.from({ length: 56 }, (_, i) => (
            <SheetRow key={i} row={i + 1} />
          ))}
        </tbody>
      </table>
      <div className="absolute right-[724px] bottom-2 left-[50px] h-5 rounded-full bg-[#b1b1b1]/65" />
    </main>
  );
}

/* ---------- bottom bars ---------- */

function SheetTabs() {
  const idle = "flex h-[50px] items-start justify-center bg-[#222222] pt-4 leading-8";
  const bar = <span className="h-[41px] w-0.5 shrink-0 bg-[#6b6b6b]" />;
  return (
    <div className="flex h-[50px] items-start bg-[#323232] text-[22px] text-[#8a8a8a]">
      <div className="flex w-[120px] gap-8 pt-4 pl-[30px]">
        <button aria-label="이전 시트">
          <Svg w={14} h={20}><path d="M14 0v20L0 10z" fill="#6e6e6e" /></Svg>
        </button>
        <button aria-label="다음 시트">
          <Svg w={14} h={20}><path d="M0 0v20l14-10z" fill="#6e6e6e" /></Svg>
        </button>
      </div>
      {bar}
      <button className={`${idle} w-48`}>assumption</button>
      <button className="relative z-10 -mt-0.5 h-[46px] w-[158px] rounded-b-md border-b-2 border-[#8a8a8a] bg-white pt-1 leading-10 font-medium text-[#3c8452]">cashflow</button>
      <button className={`${idle} w-[164px]`}>financing</button>
      {bar}
      <button className={`${idle} w-[214px]`}>balancesheet</button>
      {bar}
      <button aria-label="새 시트" className="flex h-[50px] w-[74px] justify-center pt-3.5">
        <Svg w={22} h={22}><path d="M11 1v20M1 11h20" stroke="#c4c4c4" strokeWidth="4" /></Svg>
      </button>
      {bar}
    </div>
  );
}

function StatusBar() {
  return (
    <footer className="flex h-[46px] items-center justify-between border-t border-black bg-linear-to-b from-[#494949] to-[#3a3a3a] text-[23px] text-[#f0f0f0]">
      <div className="flex items-center pl-12">
        <span>준비</span>
        <button aria-label="매크로 기록" className="ml-10">
          <Svg w={32} h={32}>
            <circle cx="6" cy="7" r="5.500" fill="#fff" />
            <path d="M12 5h17v7M24 5v20c0 3-2 4-4 4H6c-2 0-3-1-3-4h13M7 14v11" stroke="#fff" strokeWidth="2.600" />
          </Svg>
        </button>
        <button className="ml-7.5 flex items-center gap-1">
          <Svg w={34} h={34}>
            <circle cx="15" cy="6" r="3.600" stroke="#fff" strokeWidth="2" />
            <path d="M2 7c2-3 4 0 7 3 3 2 9 2 12 0s5-6 7-3c2 2-5 6-8 9v5M2 7c0 3 4 5 8 9v6L6 30c0 3 3 3 4 1l5-8" stroke="#fff" strokeWidth="2" />
            <path d="m17 26 5 5 10-13" stroke="#fff" strokeWidth="2.200" />
          </Svg>
          접근성: 계속 진행 가능
        </button>
      </div>
      <div className="flex items-center pr-[54px]">
        <button aria-label="기본 보기" className="grid h-[46px] w-[74px] place-items-center bg-[#636363]">
          <Svg w={28} h={28}>
            <path d="M2 2h24v24H2zM2 10h24M2 18h24M10 2v24M18 2v24" stroke="#fff" strokeWidth="2.200" />
          </Svg>
        </button>
        <button aria-label="페이지 레이아웃 보기" className="ml-5">
          <Svg w={28} h={28}>
            <path d="M1 2h26v24H1zM7 6h14v16H7zM10 10h8M10 14h8M10 18h8" stroke="#fff" strokeWidth="2.200" />
          </Svg>
        </button>
        <button aria-label="페이지 나누기 보기" className="ml-[43px]">
          <Svg w={28} h={28}>
            <path d="M1 2h26v24H1zM1 16h17V2M9 2v14" stroke="#fff" strokeWidth="2.200" />
          </Svg>
        </button>
        <button aria-label="축소" className="ml-[38px]">
          <Svg w={16} h={16}><path d="M0 8h16" stroke="#fff" strokeWidth="4" /></Svg>
        </button>
        <input
          type="range"
          aria-label="확대/축소"
          min={0}
          max={100}
          defaultValue={45}
          className="mx-3.5 h-2 w-[200px] appearance-none rounded-full bg-[#7e7e7e] [&::-webkit-slider-thumb]:size-8 [&::-webkit-slider-thumb]:appearance-none [&::-webkit-slider-thumb]:rounded-full [&::-webkit-slider-thumb]:bg-[#a3a3a3]"
        />
        <button aria-label="확대">
          <Svg w={16} h={16}><path d="M0 8h16M8 0v16" stroke="#fff" strokeWidth="4" /></Svg>
        </button>
        <span className="ml-10">90%</span>
      </div>
    </footer>
  );
}

export default function App() {
  return (
    <div className={`min-h-screen overflow-hidden bg-[#323232] ${UI}`}>
      <MenuBar />
      <TitleBar />
      <RibbonTabs />
      <Ribbon />
      <FormulaBar />
      <div className="h-1.5 border-y-2 border-[#b0b0b0] bg-white" />
      <Sheet />
      <SheetTabs />
      <StatusBar />
    </div>
  );
}
